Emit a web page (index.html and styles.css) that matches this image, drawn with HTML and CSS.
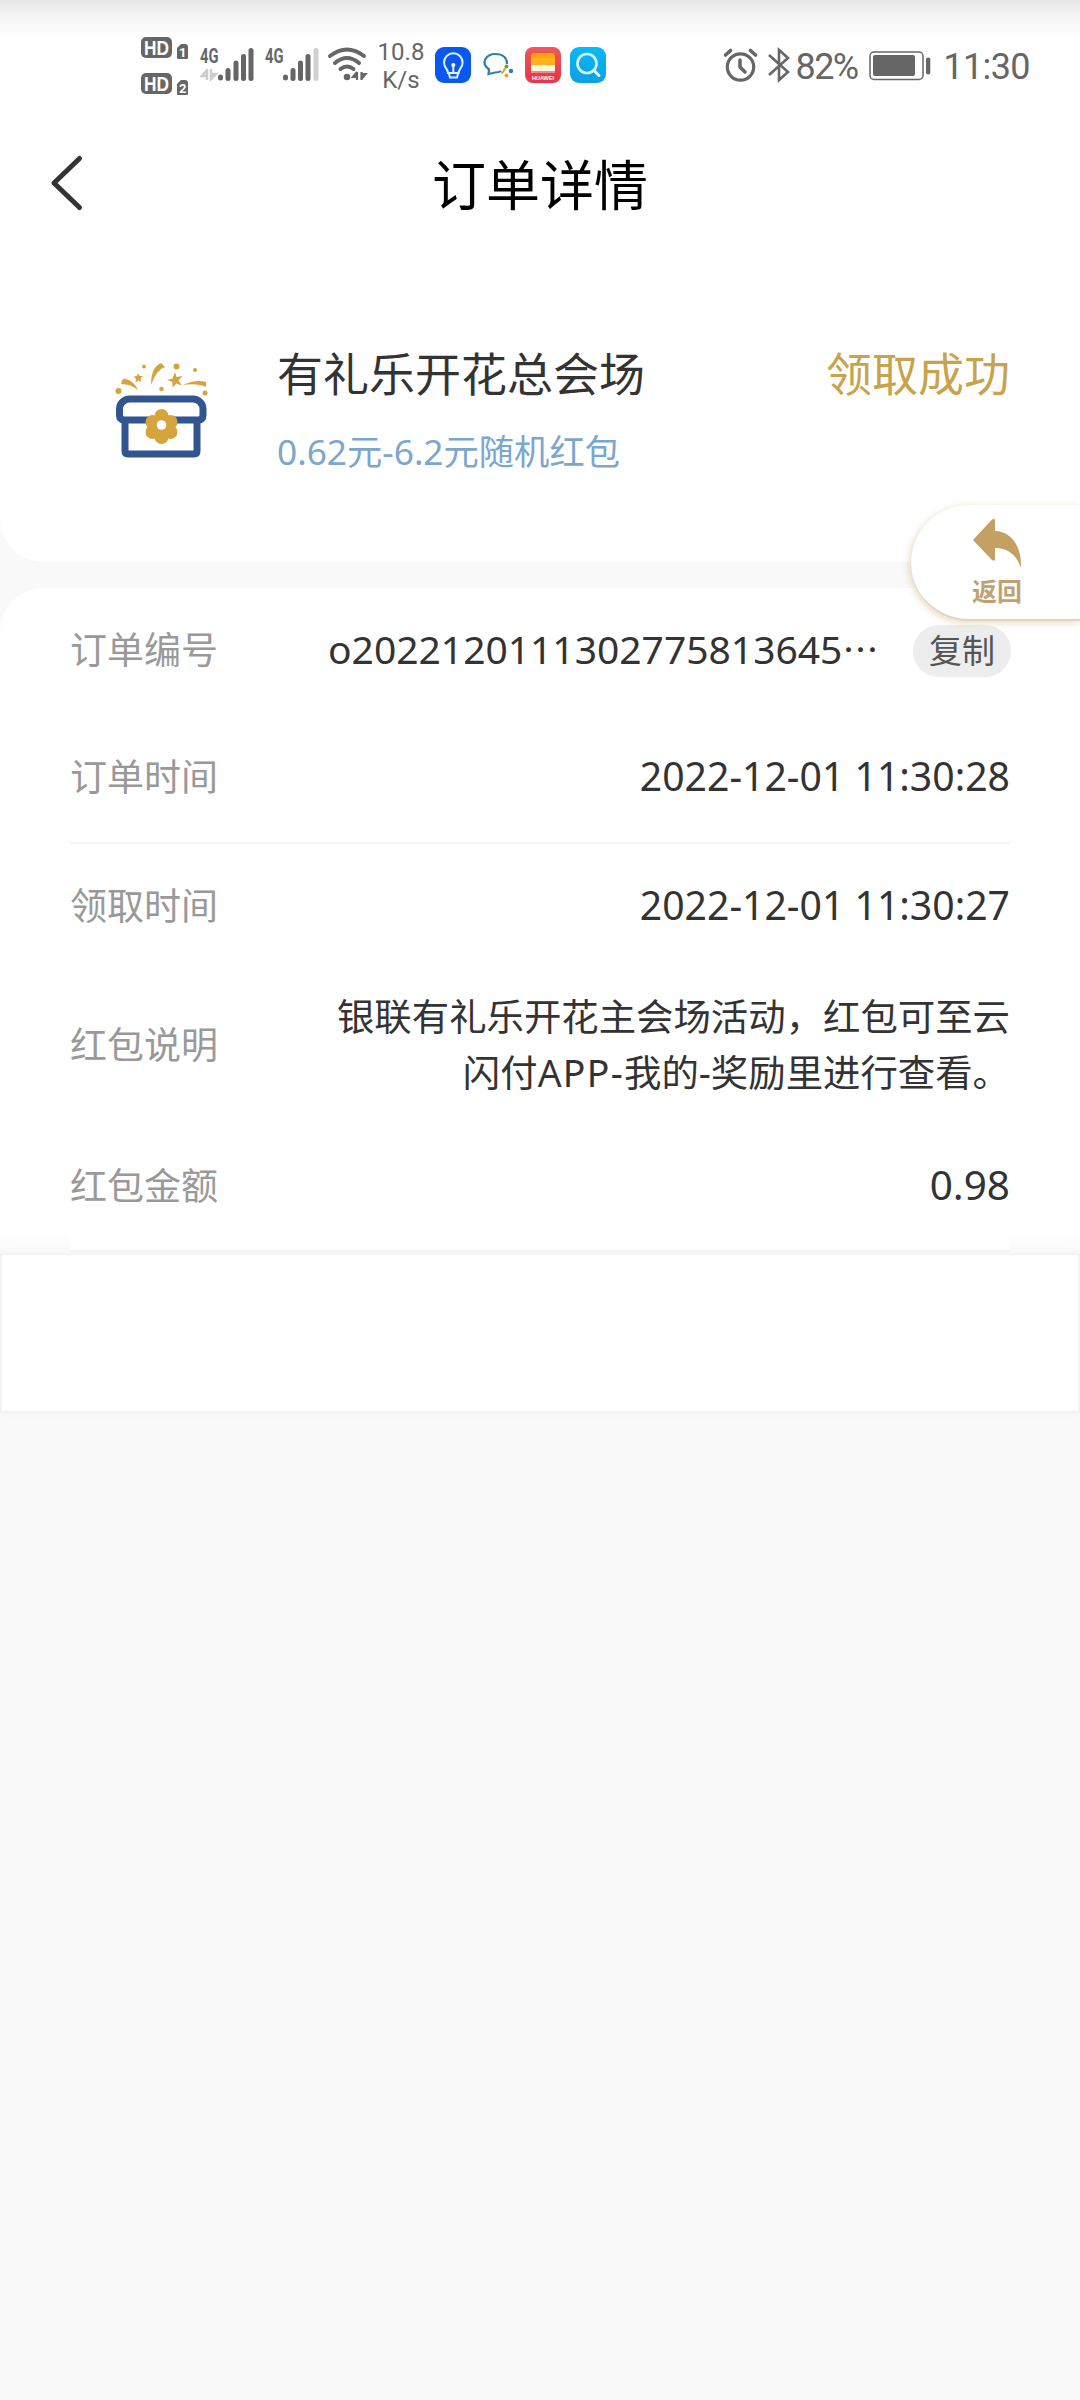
FILE: index.html
```html
<!DOCTYPE html>
<html lang="zh-CN">
<head>
<meta charset="utf-8">
<title>订单详情</title>
<link rel="stylesheet" href="styles.css">
</head>
<body>
<header class="status">
  <svg class="signals" width="230" height="64" viewBox="0 0 230 64">
    <g fill="#666">
      <rect x="1" y="1" width="31" height="21" rx="5"/>
      <rect x="1" y="37" width="31" height="21" rx="5"/>
      <path d="M37 12l4-4h4a3 3 0 0 1 3 3v11a1 1 0 0 1-1 1H38a1 1 0 0 1-1-1z"/>
      <path d="M37 48l4-4h4a3 3 0 0 1 3 3v11a1 1 0 0 1-1 1H38a1 1 0 0 1-1-1z"/>
    </g>
    <g class="hd"><text x="4" y="18.500" textLength="25" lengthAdjust="spacingAndGlyphs">HD</text><text x="4" y="54.500" textLength="25" lengthAdjust="spacingAndGlyphs">HD</text></g>
    <g class="sim"><text x="39" y="20.500">1</text><text x="39" y="56.500">2</text></g>
    <g class="net"><text x="60" y="26.500" textLength="18.500" lengthAdjust="spacingAndGlyphs">4G</text><text x="125" y="26.500" textLength="18.500" lengthAdjust="spacingAndGlyphs">4G</text></g>
    <path d="M67 33v11M67 34l-5 6h5M71 33v10l5-5h-5" fill="none" stroke="#ccc" stroke-width="2.500"/>
    <g stroke="#666" stroke-width="5" stroke-linecap="round" fill="none">
      <path d="M80.500 41v1M88 34.500v8M96 27v15.500M103.500 20.500v22M111 14.500v28"/>
      <path d="M145.500 41v1M153 34.500v8M160.500 27v15.500M168 20.500v22"/>
      <path d="M176 14.500v28" stroke="#d0d0d0"/>
    </g>
    <g stroke="#666" stroke-width="4" stroke-linecap="round" fill="none">
      <path d="M190 20q17-13 34 0M195 27q12-10 24 0M200.500 33q6.500-5 13 0"/>
    </g>
    <circle cx="207" cy="41" r="3.300" fill="#666"/>
    <path d="M217 36v8M217 36l-4 5h4M221.500 44v-8M221.500 43l4-5h-4" fill="none" stroke="#666" stroke-width="2.200"/>
  </svg>
  <div class="speed"><span>10.8</span><span>K/s</span></div>
  <svg class="apps" width="172" height="38" viewBox="0 0 172 38">
    <defs>
      <linearGradient id="sky" x1="0" y1="0" x2="0" y2="1"><stop offset="0" stop-color="#08baf7"/><stop offset="1" stop-color="#0aa0e4"/></linearGradient>
      <linearGradient id="red" x1="0" y1="0" x2="0" y2="1"><stop offset="0" stop-color="#f0585a"/><stop offset="1" stop-color="#e7344a"/></linearGradient>
    </defs>
    <rect width="36" height="36" rx="9" fill="#0a58f0"/>
    <path d="M13 26c0-4-4-5-4-10.500a9.300 9.300 0 0 1 18.600 0c0 5.500-4 6.500-4 10.500zM14 27l1 3.500h7l1-3.500M18.300 25v-7" fill="none" stroke="#d9f3ff" stroke-width="2" stroke-linecap="round"/>
    <circle cx="18.300" cy="18" r="2" fill="#fff"/>
    <path d="M66 24c-1.500 1.200-4 1.500-6 1.500l-6.500 1.500 .5-4.500C45 16 51 7 60.500 7 68 7 72 11 72 17" fill="none" stroke="#2f7eae" stroke-width="2.200"/>
    <path d="M66 26q3-1 4-5" fill="none" stroke="#e0a33a" stroke-width="2"/>
    <circle cx="71.500" cy="19.500" r="2" fill="#63a43b"/><circle cx="76" cy="24" r="2.200" fill="#2f7eae"/><circle cx="71.500" cy="28.500" r="2" fill="#e8a52b"/>
    <rect x="90" width="36" height="36" rx="8" fill="url(#red)"/>
    <path d="M96 11V9q0-3 3-3h18q3 0 3 3v2z" fill="#fca311"/><path d="M96 11h24v7H96z" fill="#ffb31a"/><path d="M96 18h24v6H96z" fill="#fff7dc"/><path d="M96 24h24v2H96z" fill="#f28a8d"/>
    <text class="brand" x="97" y="32.500" textLength="22" lengthAdjust="spacingAndGlyphs">HUAWEI</text>
    <rect x="135" width="36" height="36" rx="9" fill="url(#sky)"/>
    <circle cx="152" cy="16.500" r="9.500" fill="none" stroke="#dff6ff" stroke-width="2.600"/><path d="M159 23.500l5 5" stroke="#dff6ff" stroke-width="3" stroke-linecap="round"/>
  </svg>
  <div class="right">
    <svg width="68" height="38" viewBox="0 0 68 38" fill="none" stroke="#666" stroke-linecap="round" stroke-linejoin="round">
      <circle cx="17.500" cy="21" r="13.200" stroke-width="3.200"/><path d="M17 14v7l5 5" stroke-width="3.500"/><path d="M2.500 9l5-4.500M27.500 4.500l5 4.500" stroke-width="3.600"/>
      <path d="M46 9l19 17-9 8V4l9 8-19 17" stroke-width="2.600" stroke-linejoin="miter" stroke-linecap="butt"/>
    </svg>
    <span class="percent">82%</span>
    <svg class="battery" width="62" height="30" viewBox="0 0 62 30"><rect x="1" y="1" width="53" height="27.500" rx="4" fill="none" stroke="#666" stroke-width="1.500"/><rect x="4" y="4" width="42" height="21" rx="2" fill="#666"/><rect x="57" y="6.500" width="4.300" height="17" rx="2" fill="#666"/></svg>
    <span class="clock">11:30</span>
  </div>
</header>
<nav class="nav">
  <svg class="back" width="38" height="60" viewBox="0 0 38 60"><path d="M31.500 5.500L6 30l25.500 24.500" fill="none" stroke="#333" stroke-width="5" stroke-linecap="round" stroke-linejoin="round"/></svg>
  <h1>订单详情</h1>
</nav>
<section class="summary">
  <svg class="gift" width="94" height="98" viewBox="0 0 94 98">
    <g fill="none" stroke="#30558f" stroke-width="7">
      <path d="M4.500 52V46a10 10 0 0 1 10-10H78a10 10 0 0 1 10 10v6q0 5-5 5H9.500q-5 0-5-5z"/>
      <path d="M10 55v33q0 3 3 3h66q3 0 3-3V55"/>
    </g>
    <g fill="#d5a43d">
      <circle cx="46.500" cy="53" r="7"/><circle cx="55.500" cy="59" r="7"/><circle cx="55.500" cy="69" r="7"/><circle cx="46.500" cy="74" r="7"/><circle cx="37.500" cy="69" r="7"/><circle cx="37.500" cy="59" r="7"/><circle cx="46.500" cy="64" r="12"/>
      <path d="M6 21q1-6 5-5 9 3 12 11-7-6-17-6zM36 22Q36 4 46 0l4 4q-8 2-14 18zM68 22q12-6 23-3v5q-8-4-23-2z"/>
      <path d="M60 9l1.500 5 6-1-4 4.500 3.500 5-5.500-2-4 4v-5.500l-5.500-2 5.500-1.500zM23 10l1.500 3 3.500 0-2.500 2.500 1 3.500-3-1.500-3 2 .5-3.700-2.500-2.300 3.500-.5z"/>
      <circle cx="61.500" cy="3.500" r="3"/><circle cx="29" cy="3.500" r="2"/><circle cx="80" cy="7" r="2"/><circle cx="46.500" cy="26" r="2.300"/><circle cx="3.500" cy="28" r="3"/><circle cx="90" cy="30" r="2.500"/>
    </g>
    <circle cx="46.500" cy="62" r="4.800" fill="#fff"/>
  </svg>
  <div class="offer"><h2>有礼乐开花总会场</h2><p>0.62元-6.2元随机红包</p></div>
  <strong class="result">领取成功</strong>
</section>
<main class="details">
  <div class="row first"><span class="label">订单编号</span><span class="value">o2022120111302775813645<span class="dots">⋯</span></span><button class="copy">复制</button></div>
  <div class="row second"><span class="label">订单时间</span><span class="value">2022-12-01 11:30:28</span></div>
  <div class="row"><span class="label">领取时间</span><span class="value">2022-12-01 11:30:27</span></div>
  <div class="row note"><span class="label">红包说明</span><span class="value text">银联有礼乐开花主会场活动，红包可至云<br>闪付<span class="latin">APP-</span>我的-奖励里进行查看。</span></div>
  <div class="row last"><span class="label">红包金额</span><span class="value amount">0.98</span></div>
</main>
<footer class="bottom"></footer>
<a class="return">
  <svg width="50" height="52" viewBox="0 0 50 52"><path d="M1 22L20 1.500q3-2 3 1V13c15 0 27 14 26 37-4-12-12-20-26-20v11q0 3-3 1z" fill="#c2a163"/></svg>
  <span>返回</span>
</a>
</body>
</html>
```
FILE: styles.css
```css
* { box-sizing: border-box; }
body {
  margin: 0;
  width: 1080px;
  height: 2400px;
  overflow: hidden;
  position: relative;
  background: #f9f9f9;
  color: #333;
  font-family: "Noto Sans", "Noto Sans CJK SC", sans-serif;
}
h1, h2, p { margin: 0; font-weight: 400; white-space: nowrap; }
svg { display: block; flex: none; }

.status {
  display: flex;
  align-items: flex-start;
  height: 130px;
  padding-left: 140px;
  background: linear-gradient(#e6e6e6, #f8f8f8 20px, #fff 40px);
  color: #666;
  font-family: Roboto, sans-serif;
}
.signals { margin-top: 36px; }
.hd text { font: 700 20px "Liberation Sans", sans-serif; fill: #fff; }
.sim text { font: 700 13px Roboto, sans-serif; fill: #fff; }
.net text { font: 700 20px Roboto, sans-serif; fill: #666; }
.speed {
  display: flex;
  flex-direction: column;
  align-items: center;
  width: 60px;
  margin-top: 38px;
  padding-left: 2px;
  font-size: 24px;
  line-height: 28px;
}
.apps { margin: 47px 0 0 5px; }
.brand { font: 700 6px "Liberation Sans", sans-serif; fill: #fff; }
.right { display: flex; align-items: flex-start; margin-left: auto; padding: 46px 50px 0 0; }
.percent, .clock { font-size: 36px; line-height: 42px; font-weight: 400; }
.percent { margin: 0 0 0 5px; letter-spacing: -1.7px; }
.battery { margin: 5px 0 0 12px; }
.clock { margin: 0 0 0 12px; letter-spacing: -0.6px; }

.nav {
  display: flex;
  align-items: flex-start;
  height: 150px;
  padding: 0 86px 0 48px;
  background: #fff;
}
.back { margin-top: 23px; }
h1 {
  flex: 1;
  margin-top: 15px;
  text-align: center;
  color: #000;
  font-size: 54px;
  line-height: 80px;
}

.summary {
  display: flex;
  align-items: flex-start;
  height: 282px;
  padding: 0 70px 0 115px;
  border-radius: 0 0 44px 44px;
  background: #fff;
}
.gift { margin-top: 83px; }
.offer { margin: 60px 0 0 68px; }
h2 { font-size: 46px; line-height: 66px; }
.offer p { margin-top: 20px; color: #7ba6ce; font-size: 35.3px; line-height: 50px; }
.result { margin: 60px 0 0 auto; color: #c8a34c; font-size: 46px; line-height: 66px; font-weight: 400; }

.details {
  height: 665px;
  margin-top: 26px;
  padding: 0 70px;
  border-radius: 44px 44px 0 0;
  background: linear-gradient(#fff 645px, #f9f9f9);
}
.row { display: flex; align-items: center; height: 124px; background: #fff; }
.label { width: 230px; flex: none; color: #999; font-size: 37px; line-height: 54px; }
.value { margin: -3px 0 0 auto; font-size: 39.2px; line-height: 56px; text-align: right; white-space: nowrap; }
.first .value { margin-left: 28px; font-size: 39px; }
.dots { font-family: "Noto Sans CJK SC", sans-serif; font-size: 36px; }
.copy {
  width: 98px;
  height: 52px;
  margin: 2px -1px 0 auto;
  padding: 0 0 4px;
  border: 0;
  border-radius: 26px;
  background: #ededed;
  color: #555;
  font: 33px/48px "Noto Sans CJK SC", sans-serif;
}
.second { height: 132px; border-bottom: 2px solid #f5f5f5; }
.note { height: 154px; }
.text { margin-top: 0; font-size: 37.4px; }
.latin { letter-spacing: 1.3px; }
.amount { font-size: 40.5px; }
.last { height: 130px; border-bottom: 2px solid #f5f5f5; }

.bottom {
  height: 160px;
  border: 2px solid #f3f3f3;
  background: #fff;
  box-shadow: 0 0 20px rgba(0, 0, 0, .015);
}

.return {
  position: absolute;
  top: 505px;
  right: 0;
  display: flex;
  flex-direction: column;
  align-items: center;
  width: 169px;
  height: 116px;
  padding: 13px 0 0 3px;
  border-bottom: 2px solid #e0d3c0;
  border-radius: 58px 0 0 58px;
  background: #fff;
  box-shadow: -2px 2px 7px rgba(190, 155, 85, .35);
  color: #bfa271;
  font: 700 25px/36px "Noto Sans CJK SC", sans-serif;
}
.return span { margin-top: 2px; }
```
